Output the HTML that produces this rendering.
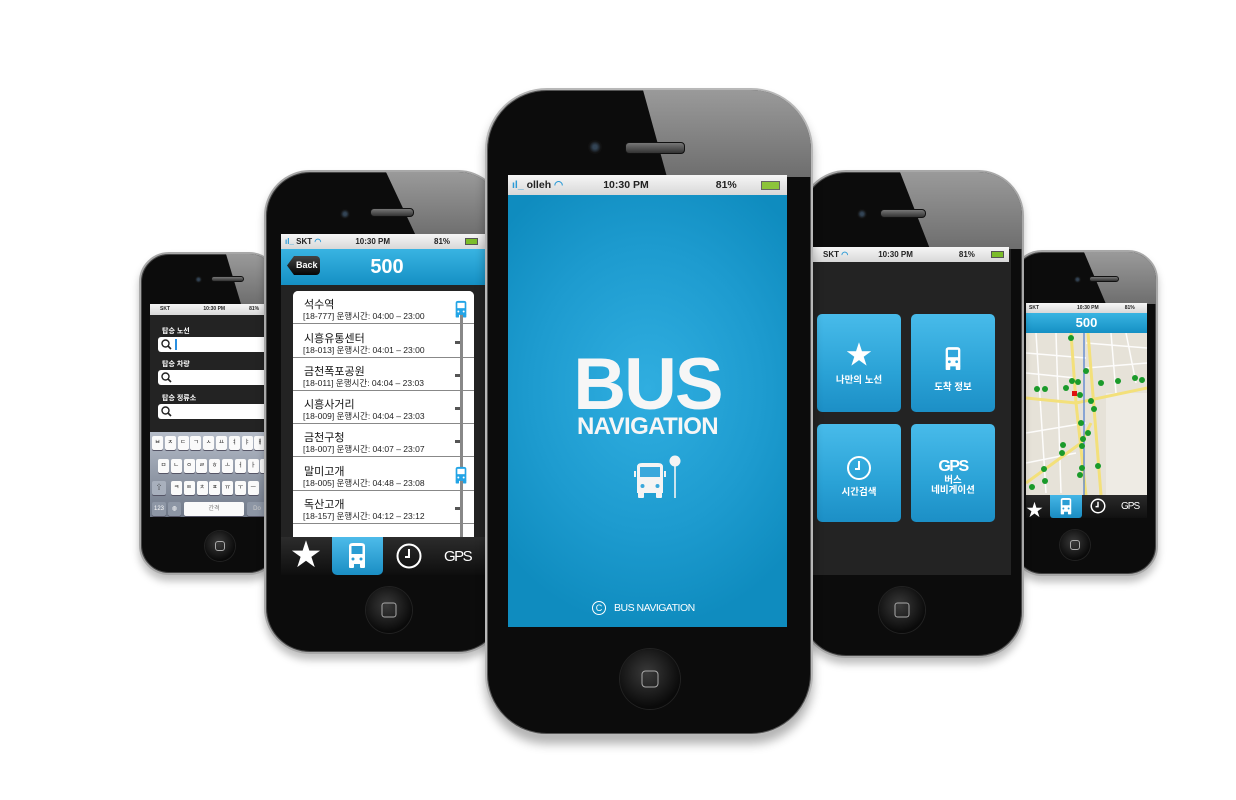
<!DOCTYPE html>
<html><head><meta charset="utf-8"><style>
*{margin:0;padding:0;box-sizing:border-box}
body{width:1236px;height:800px;background:#fff;position:relative;overflow:hidden;font-family:"Liberation Sans","Noto Sans CJK KR",sans-serif}
.a{position:absolute}
.ph{position:absolute;background:#0c0c0c;border:2px solid #a8a8a8;box-shadow:0 0 0 1px #444 inset,0 6px 8px rgba(0,0,0,.25);overflow:hidden}
.refl{position:absolute;background:linear-gradient(180deg,#9a9a9a,#6e6e6e)}
.home{position:absolute;border-radius:50%;background:radial-gradient(circle at 45% 40%,#3a3a3a,#0a0a0a 70%);box-shadow:0 0 0 1px #222}
.home i{position:absolute;left:50%;top:50%;border:1.5px solid #aaa;border-radius:3px;transform:translate(-50%,-50%)}
.cam{position:absolute;border-radius:50%;background:radial-gradient(circle,#345 20%,#111 60%)}
.spk{position:absolute;border-radius:4px;background:linear-gradient(#777,#333);border:1px solid #111}
.sb{position:absolute;background:linear-gradient(#f6f6f6,#d8d8d8);color:#222;font-weight:bold;white-space:nowrap}
.hdr{position:absolute;background:linear-gradient(#39b4e2,#1590c4);color:#fff;font-weight:bold;text-align:center}
.row{position:absolute;left:0;width:181px;height:33px;border-bottom:1px solid #888;background:#fff}
.row b{position:absolute;left:11px;top:5px;font-size:11px;font-weight:normal;color:#111}
.row s{position:absolute;left:10px;top:19px;font-size:8.5px;text-decoration:none;color:#222;white-space:nowrap}
.row em{position:absolute;left:162px;top:16px;width:8px;height:3px;background:#555}
.tile{position:absolute;width:84px;height:98px;border-radius:5px;background:linear-gradient(#48bbea,#2aa2d6 60%,#1c8fc6);color:#fff;text-align:center;font-size:9.5px;font-weight:bold}
.key{position:absolute;width:11px;height:14px;background:#fafafa;border-radius:2px;box-shadow:0 1px 0 #556;font-size:6px;text-align:center;line-height:14px;color:#222}
.fld{position:absolute;left:158px;width:110px;height:15px;background:#fff;border-radius:3px}
.lbl{position:absolute;left:162px;font-size:7px;color:#fff;font-weight:bold}
.mg{position:absolute;left:3px;top:2px}
</style></head><body>

<!-- PHONE 1 far left -->
<div class="ph" style="left:139px;top:252px;width:140px;height:323px;border-radius:30px">
 <div class="refl" style="left:0;top:0;width:140px;height:50px;clip-path:polygon(85px 0,140px 0,140px 50px,100px 50px)"></div>
 <div class="cam" style="left:54px;top:22px;width:7px;height:7px"></div>
 <div class="spk" style="left:70px;top:22px;width:33px;height:6px"></div>
 <div class="a" style="left:9px;top:50px;width:130px;height:213px;background:#232323"></div>
 <div class="home" style="left:64px;top:277px;width:30px;height:30px"><i style="width:10px;height:10px"></i></div>
</div>
<div class="sb" style="left:150px;top:304px;width:116px;height:11px;font-size:5px;line-height:11px;padding-left:10px">SKT <span style="margin-left:32px">10:30 PM</span><span style="margin-left:24px">81%</span></div>
<div class="lbl" style="top:326px">탑승 노선</div>
<div class="fld" style="top:337px"><svg class="mg" width="11" height="11" viewBox="0 0 11 11"><circle cx="4.5" cy="4.5" r="3.5" fill="none" stroke="#222" stroke-width="1.4"/><path d="M7 7 L10 10" stroke="#222" stroke-width="1.6"/></svg><span class="a" style="left:17px;top:2px;width:1.5px;height:11px;background:#2a8fe0"></span></div>
<div class="lbl" style="top:359px">탑승 차량</div>
<div class="fld" style="top:370px"><svg class="mg" width="11" height="11" viewBox="0 0 11 11"><circle cx="4.5" cy="4.5" r="3.5" fill="none" stroke="#222" stroke-width="1.4"/><path d="M7 7 L10 10" stroke="#222" stroke-width="1.6"/></svg></div>
<div class="lbl" style="top:393px">탑승 정류소</div>
<div class="fld" style="top:404px"><svg class="mg" width="11" height="11" viewBox="0 0 11 11"><circle cx="4.5" cy="4.5" r="3.5" fill="none" stroke="#222" stroke-width="1.4"/><path d="M7 7 L10 10" stroke="#222" stroke-width="1.6"/></svg></div>
<div class="a" style="left:150px;top:432px;width:116px;height:85px;background:linear-gradient(#b5bcc8,#6f7888)"></div>
<div id="kb"></div>

<!-- PHONE 5 far right -->
<div class="ph" style="left:1012px;top:250px;width:146px;height:326px;border-radius:30px">
 <div class="refl" style="left:0;top:0;width:146px;height:52px;clip-path:polygon(70px 0,146px 0,146px 52px,92px 52px)"></div>
 <div class="cam" style="left:60px;top:24px;width:7px;height:7px"></div>
 <div class="spk" style="left:75px;top:24px;width:30px;height:6px"></div>
 <div class="home" style="left:46px;top:278px;width:30px;height:30px"><i style="width:10px;height:10px"></i></div>
</div>
<div class="sb" style="left:1026px;top:303px;width:121px;height:10px;font-size:5px;line-height:10px;padding-left:3px">SKT<span style="margin-left:38px">10:30 PM</span><span style="margin-left:26px">81%</span></div>
<div class="hdr" style="left:1026px;top:313px;width:121px;height:20px;font-size:13px;line-height:20px">500</div>
<svg class="a" style="left:1026px;top:333px" width="121" height="162" viewBox="0 0 121 162">
 <rect width="121" height="162" fill="#e6e2d8"/>
 <rect x="80" y="60" width="41" height="102" fill="#eeebe4"/>
 <g stroke="#fff" stroke-width="1.5" fill="none" opacity=".9">
  <path d="M0 20 L60 25 M0 40 L50 45 M10 0 L20 160 M30 0 L35 160 M0 100 L60 90 M0 130 L50 120 M85 0 L90 60 M100 0 L110 50 M60 10 L121 15 M60 35 L121 30"/>
 </g>
 <g stroke="#f3e07a" stroke-width="3" fill="none">
  <path d="M0 65 L50 70 L121 55 M45 0 L50 70 L60 162 M62 0 L75 162 M0 150 L55 110 L65 90"/>
 </g>
 <path d="M58 0 L58 162" stroke="#4a7bd0" stroke-width="1.2"/>
 <g fill="#1a9a2a">
  <circle cx="45" cy="5" r="3"/><circle cx="60" cy="38" r="3"/><circle cx="46" cy="48" r="3"/><circle cx="52" cy="49" r="3"/><circle cx="11" cy="56" r="3"/><circle cx="19" cy="56" r="3"/><circle cx="40" cy="55" r="3"/><circle cx="75" cy="50" r="3"/><circle cx="92" cy="48" r="3"/><circle cx="109" cy="45" r="3"/><circle cx="116" cy="47" r="3"/><circle cx="54" cy="62" r="3"/><circle cx="65" cy="68" r="3"/><circle cx="68" cy="76" r="3"/><circle cx="55" cy="90" r="3"/><circle cx="62" cy="100" r="3"/><circle cx="57" cy="106" r="3"/><circle cx="37" cy="112" r="3"/><circle cx="36" cy="120" r="3"/><circle cx="56" cy="113" r="3"/><circle cx="56" cy="135" r="3"/><circle cx="54" cy="142" r="3"/><circle cx="18" cy="136" r="3"/><circle cx="19" cy="148" r="3"/><circle cx="72" cy="133" r="3"/><circle cx="6" cy="154" r="3"/>
 </g>
 <rect x="46" y="58" width="5" height="5" fill="#e01010"/>
</svg>
<div class="a" style="left:1026px;top:495px;width:121px;height:23px;background:linear-gradient(#2a2a2a,#111)"></div>
<div class="a" style="left:1050px;top:495px;width:32px;height:23px;background:linear-gradient(#45b6e6,#1a8cc2);border-radius:0 0 3px 3px"></div>
<div class="a" style="left:1026px;top:496px;font-size:17px;color:#fff">★</div>
<svg class="a" style="left:1058px;top:498px" width="16" height="17" viewBox="0 0 24 26"><path d="M4 3 Q4 0 8 0 H16 Q20 0 20 3 V21 H4Z" fill="#fff"/><rect x="6.5" y="3" width="11" height="8" fill="#2a9dd4"/><rect x="4" y="20" width="5" height="5" rx="1" fill="#fff"/><rect x="15" y="20" width="5" height="5" rx="1" fill="#fff"/><circle cx="8" cy="16" r="1.5" fill="#2a9dd4"/><circle cx="16" cy="16" r="1.5" fill="#2a9dd4"/></svg>
<svg class="a" style="left:1090px;top:498px" width="16" height="16" viewBox="0 0 26 26"><circle cx="13" cy="13" r="11" fill="none" stroke="#fff" stroke-width="2.4"/><path d="M13 6 V14 H9" fill="none" stroke="#fff" stroke-width="2.4"/></svg>
<div class="a" style="left:1121px;top:501px;font-size:10px;color:#fff;letter-spacing:-1px">GPS</div>

<!-- PHONE 2 -->
<div class="ph" style="left:264px;top:170px;width:240px;height:484px;border-radius:46px">
 <div class="refl" style="left:0;top:0;width:240px;height:64px;clip-path:polygon(120px 0,240px 0,240px 64px,150px 64px)"></div>
 <div class="cam" style="left:74px;top:37px;width:10px;height:10px"></div>
 <div class="spk" style="left:104px;top:36px;width:44px;height:9px"></div>
 <div class="home" style="left:100px;top:415px;width:46px;height:46px"><i style="width:15px;height:15px"></i></div>
</div>
<div class="sb" style="left:281px;top:234px;width:206px;height:15px;font-size:8px;line-height:15px;padding-left:4px"><span style="color:#2a9ad6">ıl_</span> SKT <span style="color:#2a9ad6">◠</span><span style="margin-left:34px">10:30 PM</span><span style="margin-left:44px">81%</span><span class="a" style="left:184px;top:4px;width:13px;height:7px;background:#7bbd2a;border:1px solid #555"></span></div>
<div class="hdr" style="left:281px;top:249px;width:206px;height:36px;font-size:20px;line-height:36px;padding-left:6px">500</div>
<div class="a" style="left:287px;top:256px;width:33px;height:19px;background:linear-gradient(#444,#050505);border-radius:4px;clip-path:polygon(7px 0,100% 0,100% 100%,7px 100%,0 50%);color:#fff;font-size:9px;font-weight:bold;line-height:19px;padding-left:9px">Back</div>
<div class="a" style="left:281px;top:285px;width:206px;height:252px;background:#232323"></div>
<div class="a" style="left:293px;top:291px;width:181px;height:246px;background:#fff;border-radius:5px 5px 0 0;overflow:hidden">
 <div class="row" style="top:0"><b>석수역</b><s>[18-777] 운행시간: 04:00 – 23:00</s></div>
 <div class="row" style="top:34px"><b>시흥유통센터</b><s>[18-013] 운행시간: 04:01 – 23:00</s><em></em></div>
 <div class="row" style="top:67px"><b>금천폭포공원</b><s>[18-011] 운행시간: 04:04 – 23:03</s><em></em></div>
 <div class="row" style="top:100px"><b>시흥사거리</b><s>[18-009] 운행시간: 04:04 – 23:03</s><em></em></div>
 <div class="row" style="top:133px"><b>금천구청</b><s>[18-007] 운행시간: 04:07 – 23:07</s><em></em></div>
 <div class="row" style="top:167px"><b>말미고개</b><s>[18-005] 운행시간: 04:48 – 23:08</s></div>
 <div class="row" style="top:200px"><b>독산고개</b><s>[18-157] 운행시간: 04:12 – 23:12</s><em></em></div>
 <div class="a" style="left:167px;top:15px;width:3px;height:235px;background:#888"></div>
</div>
<svg class="a" style="left:453px;top:300px" width="16" height="19" viewBox="0 0 24 26"><path d="M4 3 Q4 0 8 0 H16 Q20 0 20 3 V21 H4Z" fill="#22a4e6"/><rect x="6.5" y="3" width="11" height="8" fill="#fff"/><rect x="4" y="20" width="5" height="5" rx="1" fill="#22a4e6"/><rect x="15" y="20" width="5" height="5" rx="1" fill="#22a4e6"/><circle cx="8" cy="16" r="1.5" fill="#fff"/><circle cx="16" cy="16" r="1.5" fill="#fff"/></svg>
<svg class="a" style="left:453px;top:466px" width="16" height="19" viewBox="0 0 24 26"><path d="M4 3 Q4 0 8 0 H16 Q20 0 20 3 V21 H4Z" fill="#22a4e6"/><rect x="6.5" y="3" width="11" height="8" fill="#fff"/><rect x="4" y="20" width="5" height="5" rx="1" fill="#22a4e6"/><rect x="15" y="20" width="5" height="5" rx="1" fill="#22a4e6"/><circle cx="8" cy="16" r="1.5" fill="#fff"/><circle cx="16" cy="16" r="1.5" fill="#fff"/></svg>
<div class="a" style="left:281px;top:537px;width:206px;height:38px;background:linear-gradient(#2c2c2c,#0e0e0e)"></div>
<div class="a" style="left:332px;top:537px;width:51px;height:38px;background:linear-gradient(#4dbbea,#1a8ec4);border-radius:0 0 5px 5px"></div>
<div class="a" style="left:291px;top:537px;font-size:30px;line-height:38px;color:#fff">★</div>
<svg class="a" style="left:345px;top:542px" width="24" height="28" viewBox="0 0 24 26"><path d="M4 3 Q4 0 8 0 H16 Q20 0 20 3 V21 H4Z" fill="#fff"/><rect x="6.5" y="3" width="11" height="8" fill="#2a9dd4"/><rect x="4" y="20" width="5" height="5" rx="1" fill="#fff"/><rect x="15" y="20" width="5" height="5" rx="1" fill="#fff"/><circle cx="8" cy="16" r="1.5" fill="#2a9dd4"/><circle cx="16" cy="16" r="1.5" fill="#2a9dd4"/></svg>
<svg class="a" style="left:396px;top:543px" width="26" height="26" viewBox="0 0 26 26"><circle cx="13" cy="13" r="11.5" fill="none" stroke="#fff" stroke-width="2"/><path d="M13 6 V14 H9" fill="none" stroke="#fff" stroke-width="2"/></svg>
<div class="a" style="left:444px;top:548px;font-size:15px;color:#fff;letter-spacing:-1.5px">GPS</div>

<!-- PHONE 4 -->
<div class="ph" style="left:800px;top:170px;width:224px;height:488px;border-radius:46px">
 <div class="refl" style="left:0;top:0;width:224px;height:77px;clip-path:polygon(98px 0,224px 0,224px 77px,128px 77px)"></div>
 <div class="cam" style="left:55px;top:37px;width:10px;height:10px"></div>
 <div class="spk" style="left:78px;top:37px;width:46px;height:9px"></div>
 <div class="a" style="left:11px;top:77px;width:198px;height:326px;background:#232323"></div>
 <div class="home" style="left:77px;top:415px;width:46px;height:46px"><i style="width:15px;height:15px"></i></div>
</div>
<div class="sb" style="left:811px;top:247px;width:198px;height:15px;font-size:8px;line-height:15px;padding-left:12px">SKT <span style="color:#2a9ad6">◠</span><span style="margin-left:30px">10:30 PM</span><span style="margin-left:46px">81%</span><span class="a" style="left:180px;top:4px;width:13px;height:7px;background:#7bbd2a;border:1px solid #555"></span></div>
<div class="tile" style="left:817px;top:314px"><div style="font-size:26px;line-height:26px;margin-top:28px">★</div><div style="margin-top:4px">나만의 노선</div></div>
<div class="tile" style="left:911px;top:314px"><svg style="margin-top:32px" width="22" height="26" viewBox="0 0 24 26"><path d="M4 3 Q4 0 8 0 H16 Q20 0 20 3 V21 H4Z" fill="#fff"/><rect x="6.5" y="3" width="11" height="8" fill="#30a6dc"/><rect x="4" y="20" width="5" height="5" rx="1" fill="#fff"/><rect x="15" y="20" width="5" height="5" rx="1" fill="#fff"/><circle cx="8" cy="16" r="1.5" fill="#30a6dc"/><circle cx="16" cy="16" r="1.5" fill="#30a6dc"/></svg><div style="margin-top:4px">도착 정보</div></div>
<div class="tile" style="left:817px;top:424px"><svg style="margin-top:31px" width="26" height="26" viewBox="0 0 26 26"><circle cx="13" cy="13" r="11" fill="none" stroke="#fff" stroke-width="2"/><path d="M13 6 V14 H9" fill="none" stroke="#fff" stroke-width="2"/></svg><div>시간검색</div></div>
<div class="tile" style="left:911px;top:424px"><div style="font-size:16px;margin-top:34px;letter-spacing:-1.5px">GPS</div><div style="line-height:10px">버스<br>네비게이션</div></div>

<!-- CENTER PHONE -->
<div class="ph" style="left:485px;top:88px;width:328px;height:648px;border-radius:62px;border-color:#b8b8b8;box-shadow:0 0 0 1px #555 inset,0 8px 10px rgba(0,0,0,.3)">
 <div class="refl" style="left:0;top:0;width:328px;height:87px;clip-path:polygon(156px 0,328px 0,328px 87px,180px 87px)"></div>
 <div class="cam" style="left:101px;top:50px;width:14px;height:14px"></div>
 <div class="spk" style="left:138px;top:52px;width:60px;height:12px"></div>
 <div class="home" style="left:133px;top:559px;width:60px;height:60px"><i style="width:17px;height:17px;border-radius:4px"></i></div>
</div>
<div class="a" style="left:508px;top:195px;width:279px;height:432px;background:radial-gradient(ellipse 70% 55% at 50% 45%,#30aee0,#1d9bcf 60%,#0f8cbf)"></div>
<div class="sb" style="left:508px;top:175px;width:279px;height:20px;font-size:10.5px;line-height:20px;padding-left:4px"><span style="color:#2a9ad6">ıl_</span> olleh <span style="color:#2a9ad6">◠</span><span style="margin-left:40px">10:30 PM</span><span style="margin-left:67px">81%</span><span class="a" style="left:253px;top:6px;width:19px;height:9px;background:#8cc43a;border:1px solid #666"></span></div>
<div class="a" style="left:508px;top:345px;width:279px;text-align:center;color:#f6f6f6;font-size:73px;font-weight:bold;letter-spacing:-2px;line-height:80px">BUS</div>
<div class="a" style="left:508px;top:413px;width:279px;text-align:center;color:#f6f6f6;font-size:24px;font-weight:bold;letter-spacing:-0.6px;line-height:28px">NAVIGATION</div>
<svg class="a" style="left:634px;top:455px" width="50" height="44" viewBox="0 0 50 44"><path d="M3 12 Q3 8 8 8 H24 Q29 8 29 12 V38 H3Z" fill="#f4f4f4"/><rect x="6" y="12" width="20" height="10" fill="#3aa8dc"/><rect x="4" y="37" width="6" height="6" rx="1" fill="#f4f4f4"/><rect x="22" y="37" width="6" height="6" rx="1" fill="#f4f4f4"/><circle cx="8.5" cy="31" r="2" fill="#3aa8dc"/><circle cx="23.5" cy="31" r="2" fill="#3aa8dc"/><rect x="0" y="16" width="2" height="6" fill="#f4f4f4"/><rect x="30" y="16" width="2" height="6" fill="#f4f4f4"/><circle cx="41" cy="6" r="5.5" fill="#f4f4f4"/><rect x="40.2" y="10" width="1.6" height="33" fill="#f4f4f4"/></svg>
<div class="a" style="left:592px;top:601px;width:14px;height:14px;border:1.2px solid #fff;border-radius:50%;color:#fff;font-size:9px;line-height:12px;text-align:center">C</div>
<div class="a" style="left:614px;top:602px;color:#fff;font-size:10.5px;letter-spacing:-0.5px">BUS NAVIGATION</div>

<script>
var kb=document.getElementById('kb'),h='';
var r=[['ㅂ','ㅈ','ㄷ','ㄱ','ㅅ','ㅛ','ㅕ','ㅑ','ㅐ'],['ㅁ','ㄴ','ㅇ','ㄹ','ㅎ','ㅗ','ㅓ','ㅏ','ㅣ'],['ㅋ','ㅌ','ㅊ','ㅍ','ㅠ','ㅜ','ㅡ']];
var xs=[152,158,171],ys=[436,459,481];
for(var i=0;i<3;i++)for(var j=0;j<r[i].length;j++){var x=xs[i]+j*12.8;if(x>263)continue;h+='<div class="key" style="left:'+x+'px;top:'+ys[i]+'px">'+r[i][j]+'</div>';}
h+='<div class="key" style="left:152px;top:481px;width:14px;background:#a8b0bd">⇧</div>';
h+='<div class="key" style="left:152px;top:502px;width:14px;background:#8d96a5;color:#fff">123</div>';
h+='<div class="key" style="left:168px;top:502px;width:13px;background:#8d96a5;color:#fff">◍</div>';
h+='<div class="key" style="left:184px;top:502px;width:60px;color:#777">간격</div>';
h+='<div class="key" style="left:247px;top:502px;width:20px;background:#8d96a5;color:#ccc">Do</div>';
kb.innerHTML=h;
</script>
</body></html>
